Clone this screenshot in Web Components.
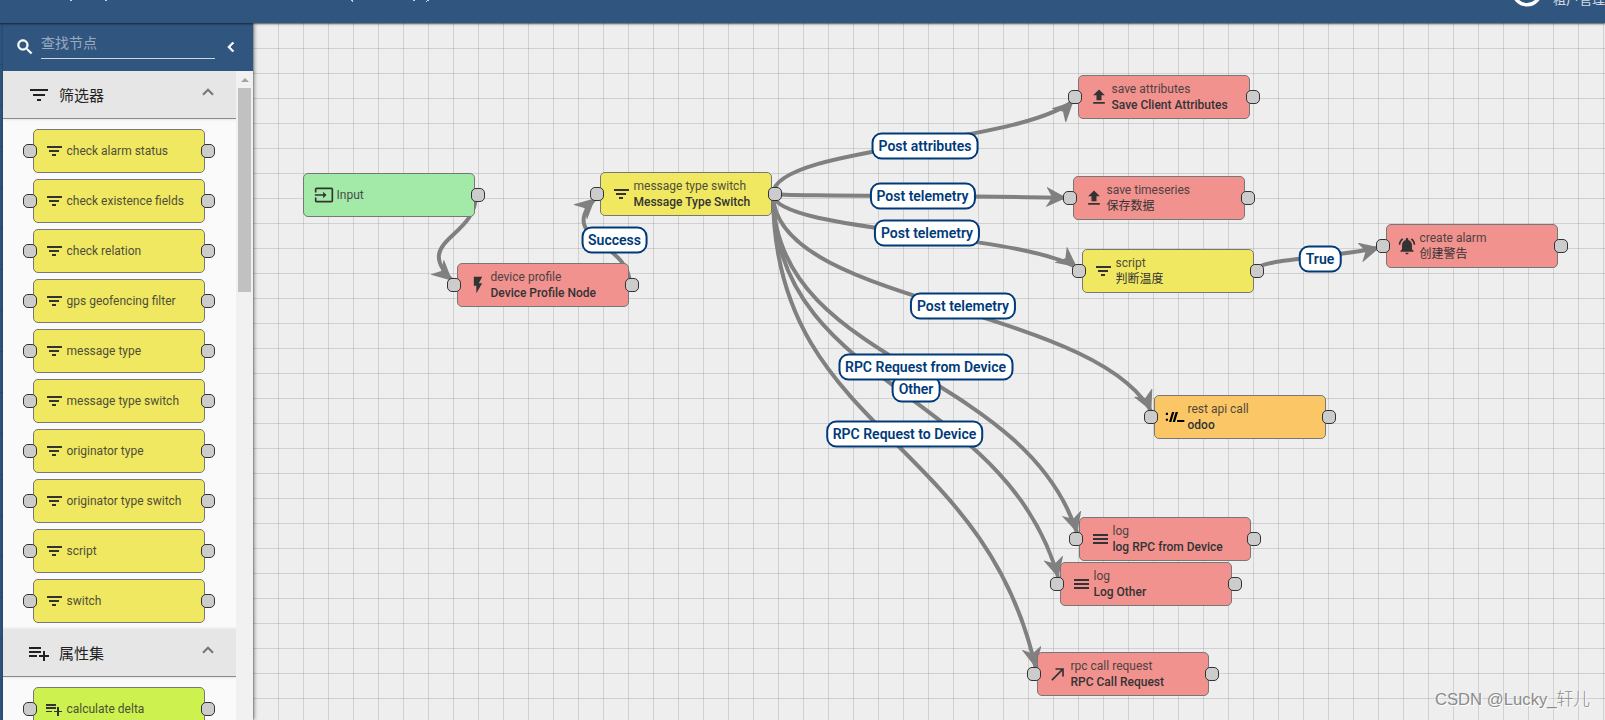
<!DOCTYPE html>
<html lang="zh">
<head>
<meta charset="utf-8">
<title>Rule chain</title>
<style>
  body {
    margin: 0;
    height: 720px;
    overflow: hidden;
    font-family: Roboto, "Noto Sans CJK SC", sans-serif;
  }
</style>
</head>
<body>
<rule-chain-page></rule-chain-page>

<script>
const ICONS = {
  filter: `<path shape-rendering="crispEdges" d="M10 18h4v-2h-4v2zM3 6v2h18V6H3zm3 7h12v-2H6v2z"/>`,
  playlist: `<path shape-rendering="crispEdges" d="M14 10H2v2h12v-2zm0-4H2v2h12V6zm4 8v-4h-2v4h-4v2h4v4h2v-4h4v-2h-4zM2 16h8v-2H2v2z"/>`,
  input: `<path d="M21 3.01H3c-1.1 0-2 .9-2 2V9h2V4.99h18v14.03H3V15H1v4.01c0 1.1.9 1.98 2 1.98h18c1.1 0 2-.88 2-1.98v-14c0-1.11-.9-2-2-2zM11 16l4-4-4-4v3H1v2h10v3z"/>`,
  flash: `<path d="M7 2v11h3v9l7-12h-4l4-8z"/>`,
  upload: `<path d="M9 16h6v-6h4l-7-7-7 7h4zm-4 2h14v2H5z"/>`,
  alarm: `<path d="M7.58 4.08L6.15 2.65C3.75 4.48 2.17 7.3 2.03 10.5h2c.15-2.65 1.51-4.97 3.55-6.42zm12.39 6.42h2c-.15-3.2-1.73-6.02-4.12-7.85l-1.42 1.43c2.02 1.45 3.39 3.77 3.54 6.42zM18 11c0-3.07-1.64-5.64-4.5-6.32V4c0-.83-.67-1.5-1.5-1.5s-1.5.67-1.5 1.5v.68C7.63 5.36 6 7.92 6 11v5l-2 2v1h16v-1l-2-2v-5zm-6 11c.14 0 .27-.01.4-.04.65-.14 1.18-.58 1.44-1.18.1-.24.15-.5.15-.78h-4c.01 1.1.9 2 2.01 2z"/>`,
  rest: `<path fill="#000" d="M1 7h2.6v2.6H1zM1 14h2.6v2.6H1zM8.4 6h2.8L7.6 18H4.8zM12.8 6h2.8L12 18H9.2zM14.5 15.6h8.7V18h-8.7z"/>`,
  menu: `<path shape-rendering="crispEdges" d="M3 18h18v-2H3v2zm0-5h18v-2H3v2zm0-7v2h18V6H3z"/>`,
  made: `<path d="M9 5v2h6.59L4 18.59 5.41 20 17 8.41V15h2V5z"/>`,
  search: `<path stroke="currentColor" stroke-width=".6" d="M15.5 14h-.79l-.28-.27C15.41 12.59 16 11.11 16 9.5 16 5.91 13.09 3 9.5 3S3 5.91 3 9.5 5.91 16 9.5 16c1.61 0 3.09-.59 4.23-1.57l.27.28v.79l5 4.99L20.49 19l-4.99-5zm-6 0C7.01 14 5 11.99 5 9.5S7.01 5 9.5 5 14 7.01 14 9.5 11.99 14 9.5 14z"/>`,
  left: `<path stroke="currentColor" stroke-width=".8" d="M15.41 7.41L14 6l-6 6 6 6 1.41-1.41L10.83 12z"/>`,
};

const NODES = [
  { x: 303, y: 173, color: "#a3eaa9", icon: "input", type: "Input", source: true },
  { x: 600, y: 172, color: "#f1e861", icon: "filter", type: "message type switch", name: "Message Type Switch" },
  { x: 457, y: 263, color: "#f1928f", icon: "flash", type: "device profile", name: "Device Profile Node" },
  { x: 1078, y: 75, color: "#f1928f", icon: "upload", type: "save attributes", name: "Save Client Attributes" },
  { x: 1073, y: 176, color: "#f1928f", icon: "upload", type: "save timeseries", name: "保存数据" },
  { x: 1082, y: 249, color: "#f1e861", icon: "filter", type: "script", name: "判断温度" },
  { x: 1386, y: 224, color: "#f1928f", icon: "alarm", type: "create alarm", name: "创建警告" },
  { x: 1154, y: 395, color: "#fbc766", icon: "rest", type: "rest api call", name: "odoo" },
  { x: 1079, y: 517, color: "#f1928f", icon: "menu", type: "log", name: "log RPC from Device" },
  { x: 1060, y: 562, color: "#f1928f", icon: "menu", type: "log", name: "Log Other" },
  { x: 1037, y: 652, color: "#f1928f", icon: "made", type: "rpc call request", name: "RPC Call Request" },
];

// from, to: indexes in NODES
const EDGES = [
  { from: 0, to: 2 },
  { from: 2, to: 1, label: "Success" },
  { from: 1, to: 3, label: "Post attributes" },
  { from: 1, to: 4, label: "Post telemetry" },
  { from: 1, to: 5, label: "Post telemetry" },
  { from: 1, to: 7, label: "Post telemetry" },
  { from: 1, to: 9, label: "Other" },
  { from: 1, to: 8, label: "RPC Request from Device" },
  { from: 1, to: 10, label: "RPC Request to Device" },
  { from: 5, to: 6, label: "True" },
];

const FILTERS = [
  "check alarm status",
  "check existence fields",
  "check relation",
  "gps geofencing filter",
  "message type",
  "message type switch",
  "originator type",
  "originator type switch",
  "script",
  "switch",
];

class BaseElement extends HTMLElement {
  connectedCallback() {
    if (this.shadowRoot) return;
    this.attachShadow({ mode: "open" }).innerHTML = this.template();
  }
}

class UiIcon extends BaseElement {
  template() {
    return `
<style>
  :host {
    display: block;
    flex: none;
    width: var(--icon-size, 20px);
    height: var(--icon-size, 20px);
  }
  svg { display: block; width: 100%; height: 100%; fill: currentColor; }
</style>
<svg viewBox="0 0 24 24">${ICONS[this.getAttribute("name")]}</svg>`;
  }
}

class RuleNode extends BaseElement {
  template() {
    const name = this.getAttribute("name");
    const source = this.hasAttribute("source");
    const cjk = /[\u4e00-\u9fff]/.test(name);

    return `
<style>
  :host {
    display: flex;
    align-items: center;
    gap: 2.5px;
    position: relative;
    box-sizing: border-box;
    width: 172px;
    height: 44px;
    padding: 0 10px;
    border: 1px solid #777;
    border-radius: 5px;
    background: var(--node-color);
    color: #333;
    font-size: 12px;
    line-height: 16px;
    white-space: nowrap;
  }
  .type { opacity: .85; }
  .name { font-weight: 500; }
  .cjk { font-weight: 400; }
  .connector {
    position: absolute;
    top: 14px;
    box-sizing: border-box;
    width: 14px;
    height: 14px;
    border: 1px solid #333;
    border-radius: 5px;
    background: #ccc;
  }
  .in { left: -11px; }
  .out { right: -11px; }
</style>
<ui-icon name="${this.getAttribute("icon")}"></ui-icon>
<div>
  <div class="type">${this.getAttribute("type")}</div>
  ${name ? `<div class="name ${cjk ? "cjk" : ""}">${name}</div>` : ""}
</div>
${source ? "" : `<i class="connector in"></i>`}
<i class="connector out"></i>`;
  }
}

class EdgeLabel extends BaseElement {
  template() {
    return `
<style>
  :host {
    display: block;
    box-sizing: border-box;
    height: 27px;
    padding: 0 5px;
    border: 2px solid #003a79;
    border-radius: 10px;
    background: #fff;
    color: #003a79;
    font-size: 14px;
    font-weight: 600;
    line-height: 23px;
    white-space: nowrap;
  }
</style>
<slot></slot>`;
  }
}

class RuleCanvas extends BaseElement {
  path(from, to) {
    const x1 = from.x + 173;
    const y1 = from.y + 22;
    const x2 = to.x;
    const y2 = to.y + 22;
    const mid = (y1 + y2) / 2;
    return `M${x1},${y1} C${x1},${mid} ${x2 - 50},${mid} ${x2},${y2}`;
  }

  template() {
    const paths = EDGES.map((e) =>
      `<path d="${this.path(NODES[e.from], NODES[e.to])}" marker-end="url(#arrow)"/>`
    ).join("");

    const nodes = NODES.map((n) => `
<rule-node style="left:${n.x}px;top:${n.y}px;--node-color:${n.color}"
  icon="${n.icon}" type="${n.type}" ${n.name ? `name="${n.name}"` : ""} ${n.source ? "source" : ""}></rule-node>`
    ).join("");

    const labels = EDGES.filter((e) => e.label).map((e) => {
      const from = NODES[e.from];
      const to = NODES[e.to];
      const x = (from.x + to.x + 172) / 2;
      const y = (from.y + to.y) / 2 + 22;
      return `<edge-label style="left:${x}px;top:${y}px">${e.label}</edge-label>`;
    }).join("");

    return `
<style>
  :host {
    display: block;
    position: absolute;
    inset: 0;
    background-color: #eee;
    background-image:
      linear-gradient(to right, rgba(0, 0, 0, .12) 1px, transparent 1px),
      linear-gradient(to bottom, rgba(0, 0, 0, .12) 1px, transparent 1px);
    background-size: 25px 25px;
    background-position: 3px 23px;
  }
  svg { display: block; fill: none; stroke: gray; stroke-width: 4; }
  rule-node, edge-label { position: absolute; }
  edge-label { transform: translate(-50%, -50%); }
</style>
<svg width="1605" height="720">
  <marker id="arrow" viewBox="-6 -6 12 12" refX="10" refY="0" markerWidth="5" markerHeight="5" orient="auto">
    <polygon points="-2,0 -5,5 5,0 -5,-5" fill="gray" stroke="gray" stroke-width="1"/>
  </marker>
  ${paths}
</svg>
${nodes}
${labels}`;
  }
}

class NodeGroup extends BaseElement {
  template() {
    return `
<style>
  :host { display: block; }
  header {
    display: flex;
    align-items: center;
    box-sizing: border-box;
    height: 48px;
    padding: 0 22px 0 24px;
    border-bottom: 1px solid #8a8a8a;
    background: #e6e6e6;
    color: #212121;
    font-size: 15px;
    box-shadow: 0 0 3px rgba(0, 0, 0, .15);
    --icon-size: 24px;
  }
  .title { flex: 1; margin-left: 8px; }
  .arrow { fill: none; stroke: #757575; stroke-width: 2; margin-top: -5px; }
  .nodes {
    display: flex;
    flex-direction: column;
    gap: 6px;
    padding: 10px 0 6px 30px;
  }
</style>
<header>
  <ui-icon name="${this.getAttribute("icon")}"></ui-icon>
  <span class="title">${this.getAttribute("label")}</span>
  <svg class="arrow" width="12" height="8"><path d="M1 6.7L6 1.7L11 6.7"/></svg>
</header>
<div class="nodes"><slot></slot></div>`;
  }
}

class NodeLibrary extends BaseElement {
  template() {
    return `
<style>
  :host {
    display: flex;
    flex-direction: column;
    position: relative;
    width: 250px;
    background: #fafafa;
    box-shadow: 1px 0 4px rgba(0, 0, 0, .5);
  }
  .search {
    display: flex;
    align-items: center;
    flex: none;
    height: 48px;
    padding: 0 10px 0 12px;
    background: #305680;
    color: #fff;
    --icon-size: 20px;
  }
  .field {
    width: 174px;
    height: 27px;
    margin: -4px 6px 0;
    border-bottom: 1px solid rgba(255, 255, 255, .75);
    color: rgba(255, 255, 255, .5);
    font-size: 14px;
    line-height: 25px;
  }
  .body { display: flex; flex: 1; min-height: 0; }
  .list { width: 233px; overflow: hidden; }
  .scrollbar {
    width: 13px;
    padding: 7px 2px 0;
    background: #f1f1f1;
  }
  .up {
    width: 0;
    margin: 0 auto 6px;
    border: 4px solid transparent;
    border-top: 0;
    border-bottom-color: #a3a3a3;
  }
  .thumb { height: 204px; background: #c1c1c1; }
</style>
<div class="search">
  <ui-icon name="search"></ui-icon>
  <div class="field">查找节点</div>
  <ui-icon name="left"></ui-icon>
</div>
<div class="body">
  <div class="list">
    <node-group icon="filter" label="筛选器">
      ${FILTERS.map((type) => `<rule-node style="--node-color:#f1e861" icon="filter" type="${type}"></rule-node>`).join("")}
    </node-group>
    <node-group icon="playlist" label="属性集">
      <rule-node style="--node-color:#cdf14e" icon="playlist" type="calculate delta"></rule-node>
    </node-group>
  </div>
  <div class="scrollbar"><div class="up"></div><div class="thumb"></div></div>
</div>`;
  }
}

class AppToolbar extends BaseElement {
  template() {
    return `
<style>
  :host {
    display: flex;
    justify-content: space-between;
    position: relative;
    z-index: 1;
    height: 23px;
    background: #305680;
    box-shadow: 0 1px 2px rgba(0, 0, 0, .6);
    color: rgba(255, 255, 255, .8);
  }
  svg { display: block; flex: none; }
  .user { display: flex; width: 92px; }
  .role { margin: -9px 0 0 12px; font-size: 13px; line-height: 18px; white-space: nowrap; }
</style>
<svg width="440" height="2" fill="#c8d3de">
  <path d="M70 0h2v1h-2zM105 0h2v1h-2zM351 0h2v1h-2zM352 1h1v1h-1zM413 0h2v1h-2zM427 0h2v1h-2zM426 1h1v1h-1z"/>
</svg>
<div class="user">
  <svg width="28" height="8" fill="none" stroke="#fff" stroke-width="3.4"><circle cx="14" cy="-9" r="13.7"/></svg>
  <span class="role">租户管理</span>
</div>`;
  }
}

class RuleChainPage extends BaseElement {
  template() {
    return `
<style>
  :host {
    display: flex;
    flex-direction: column;
    position: relative;
    width: 1605px;
    height: 720px;
    overflow: hidden;
  }
  main { display: flex; flex: 1; min-height: 0; }
  .menu {
    position: relative;
    width: 3px;
    background: repeating-linear-gradient(#2a4c72 0 1px, #305680 1px 41px);
  }
  .watermark {
    position: absolute;
    right: 15px;
    bottom: 8px;
    color: #8b8b8b;
    font: 300 16.7px/24px "Liberation Sans", "Noto Sans CJK SC", sans-serif;
    text-shadow: 1px 1px 0 #fff;
  }
</style>
<rule-canvas></rule-canvas>
<app-toolbar></app-toolbar>
<main>
  <div class="menu"></div>
  <node-library></node-library>
</main>
<div class="watermark">CSDN @Lucky_轩儿</div>`;
  }
}

customElements.define("ui-icon", UiIcon);
customElements.define("rule-node", RuleNode);
customElements.define("edge-label", EdgeLabel);
customElements.define("rule-canvas", RuleCanvas);
customElements.define("node-group", NodeGroup);
customElements.define("node-library", NodeLibrary);
customElements.define("app-toolbar", AppToolbar);
customElements.define("rule-chain-page", RuleChainPage);
</script>
</body>
</html>
